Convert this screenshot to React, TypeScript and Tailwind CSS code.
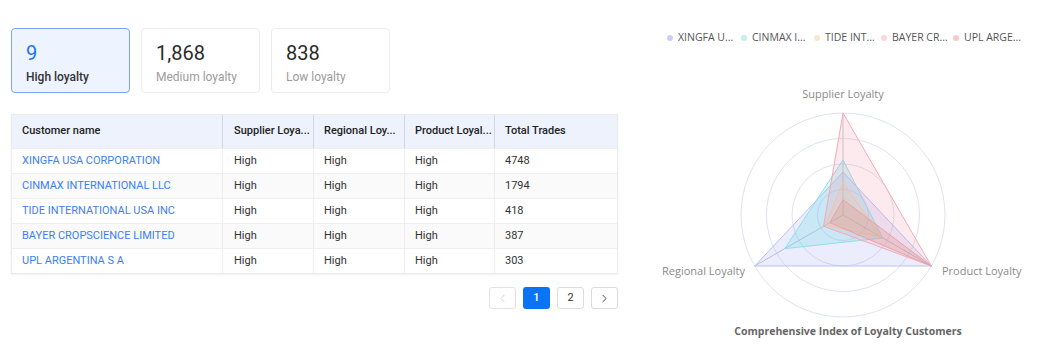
import React from "react";
import { ChevronLeft, ChevronRight } from "lucide-react";

const cards = [
  { value: "9", label: "High loyalty", active: true },
  { value: "1,868", label: "Medium loyalty", active: false },
  { value: "838", label: "Low loyalty", active: false },
];

const rows = [
  { name: "XINGFA USA CORPORATION", trades: "4748" },
  { name: "CINMAX INTERNATIONAL LLC", trades: "1794" },
  { name: "TIDE INTERNATIONAL USA INC", trades: "418" },
  { name: "BAYER CROPSCIENCE LIMITED", trades: "387" },
  { name: "UPL ARGENTINA S A", trades: "303" },
];

// values: supplier, product, regional (0..1)
const series = [
  { name: "XINGFA U...", w: "w-[74px]", dot: "bg-[#c9cff5]", stroke: "#b9c1f2", fill: "rgba(130,145,240,0.16)", v: [0.42, 1, 1] },
  { name: "CINMAX I...", w: "w-[73px]", dot: "bg-[#c4eef0]", stroke: "#93e0e6", fill: "rgba(110,215,225,0.26)", v: [0.54, 0.45, 0.66] },
  { name: "TIDE INT...", w: "w-[67px]", dot: "bg-[#fde6c8]", stroke: "#f6cfa0", fill: "rgba(250,200,140,0.22)", v: [0.32, 0.43, 0.2] },
  { name: "BAYER CR...", w: "w-[72px]", dot: "bg-[#fbd7dc]", stroke: "#f3aab6", fill: "rgba(240,150,170,0.2)", v: [1, 1, 0.22] },
  { name: "UPL ARGE...", w: "w-auto", dot: "bg-[#f8c9c9]", stroke: "#eda2a0", fill: "rgba(230,130,115,0.24)", v: [0.15, 1, 0.15] },
];

const CX = 203;
const CY = 170;
const R = 102;
const dirs = [
  [0, -1],
  [0.866, 0.5],
  [-0.866, 0.5],
];

const Radar = () => (
  <svg width="410" height="275" className="block">
    {[0.25, 0.5, 0.75, 1].map((k) => (
      <circle key={k} cx={CX} cy={CY} r={R * k} fill="none" stroke="#dfe2f4" strokeWidth="1" />
    ))}
    {dirs.map((d, i) => (
      <line key={i} x1={CX} y1={CY} x2={CX + d[0] * R} y2={CY + d[1] * R} stroke="#c9c9d2" strokeWidth="1" />
    ))}
    {series.map((s) => (
      <polygon
        key={s.name}
        points={s.v.map((val, i) => `${CX + dirs[i][0] * R * val},${CY + dirs[i][1] * R * val}`).join(" ")}
        fill={s.fill}
        stroke={s.stroke}
        strokeWidth="1"
        strokeLinejoin="round"
      />
    ))}
    <text x={CX} y={53} textAnchor="middle" fontSize="11" fill="#8a8a8a" fontFamily="'Open Sans', sans-serif">
      Supplier Loyalty
    </text>
    <text x={105} y={230} textAnchor="end" fontSize="11" fill="#8a8a8a" fontFamily="'Open Sans', sans-serif">
      Regional Loyalty
    </text>
    <text x={302} y={230} textAnchor="start" fontSize="11" fill="#8a8a8a" fontFamily="'Open Sans', sans-serif">
      Product Loyalty
    </text>
  </svg>
);

export default function App() {
  return (
    <div className="w-[1050px] h-[361px] bg-white flex font-['Roboto',sans-serif] overflow-hidden">
      <div className="w-[640px] pl-[11px] pt-[28px]">
        <div className="flex gap-[11px]">
          {cards.map((c) => (
            <div
              key={c.label}
              className={`w-[119px] h-[65px] rounded-[4px] border pl-[14px] pt-[12px] ${
                c.active ? "border-[#79a6f4] bg-[#eef4ff]" : "border-[#ececec] bg-white"
              }`}
            >
              <div className={`text-[20px] leading-[24px] ${c.active ? "text-[#1a73f5]" : "text-[#2b2b2b]"}`}>{c.value}</div>
              <div
                className={`mt-[4px] text-[12px] leading-[16px] ${
                  c.active ? "text-[#333] font-medium" : "text-[#9c9c9c]"
                }`}
              >
                {c.label}
              </div>
            </div>
          ))}
        </div>

        <div className="mt-[21px] w-[607px] border border-[#ebebeb] shadow-[0_1px_2px_rgba(0,0,0,0.06)]">
          <div className="flex h-[33px] bg-[#edf2fd] text-[11px] font-medium text-[#222] items-stretch">
            <div className="w-[211px] pl-[10px] flex items-center border-r border-[#d3d7df]">Customer name</div>
            <div className="w-[91px] pl-[11px] flex items-center border-r border-[#d3d7df]">Supplier Loya...</div>
            <div className="w-[91px] pl-[10px] flex items-center border-r border-[#d3d7df]">Regional Loy...</div>
            <div className="w-[90px] pl-[10px] flex items-center border-r border-[#d3d7df]">Product Loyal...</div>
            <div className="flex-1 pl-[10px] flex items-center">Total Trades</div>
          </div>
          {rows.map((r, i) => (
            <div
              key={r.name}
              className={`flex h-[25px] text-[11px] border-t border-[#eeeeee] ${i % 2 === 1 ? "bg-[#fafafa]" : "bg-white"}`}
            >
              <div className="w-[211px] pl-[10px] flex items-center border-r border-[#eeeeee] text-[#3d7ef5]">{r.name}</div>
              <div className="w-[91px] pl-[11px] flex items-center border-r border-[#eeeeee] text-[#333]">High</div>
              <div className="w-[91px] pl-[10px] flex items-center border-r border-[#eeeeee] text-[#333]">High</div>
              <div className="w-[90px] pl-[10px] flex items-center border-r border-[#eeeeee] text-[#333]">High</div>
              <div className="flex-1 pl-[10px] flex items-center text-[#333]">{r.trades}</div>
            </div>
          ))}
        </div>

        <div className="w-[607px] mt-[13px] flex justify-end gap-[7px]">
          <div className="w-[27px] h-[22px] rounded-[3px] border border-[#e3e3e3] flex items-center justify-center text-[#c8c8c8]">
            <ChevronLeft className="w-[13px] h-[13px]" strokeWidth={1.5} />
          </div>
          <div className="w-[27px] h-[22px] rounded-[3px] bg-[#0a74f5] flex items-center justify-center text-white text-[11px] font-medium">
            1
          </div>
          <div className="w-[27px] h-[22px] rounded-[3px] border border-[#dcdcdc] flex items-center justify-center text-[#333] text-[11px]">
            2
          </div>
          <div className="w-[27px] h-[22px] rounded-[3px] border border-[#dcdcdc] flex items-center justify-center text-[#444]">
            <ChevronRight className="w-[13px] h-[13px]" strokeWidth={1.8} />
          </div>
        </div>
      </div>

      <div className="w-[410px] flex flex-col">
        <div className="mt-[30px] h-[15px] pl-[27px] flex items-center font-['Open_Sans',sans-serif] text-[10.5px] text-[#555] whitespace-nowrap">
          {series.map((s) => (
            <div key={s.name} className={`flex items-center gap-[5px] shrink-0 ${s.w}`}>
              <span className={`w-[6px] h-[6px] rounded-full shrink-0 ${s.dot}`} />
              <span>{s.name}</span>
            </div>
          ))}
        </div>
        <Radar />
        <div className="mt-[4px] text-center font-['Open_Sans',sans-serif] text-[10.5px] leading-[14px] font-bold text-[#666] pl-[6px] whitespace-nowrap">
          Comprehensive Index of Loyalty Customers
        </div>
      </div>
    </div>
  );
}
